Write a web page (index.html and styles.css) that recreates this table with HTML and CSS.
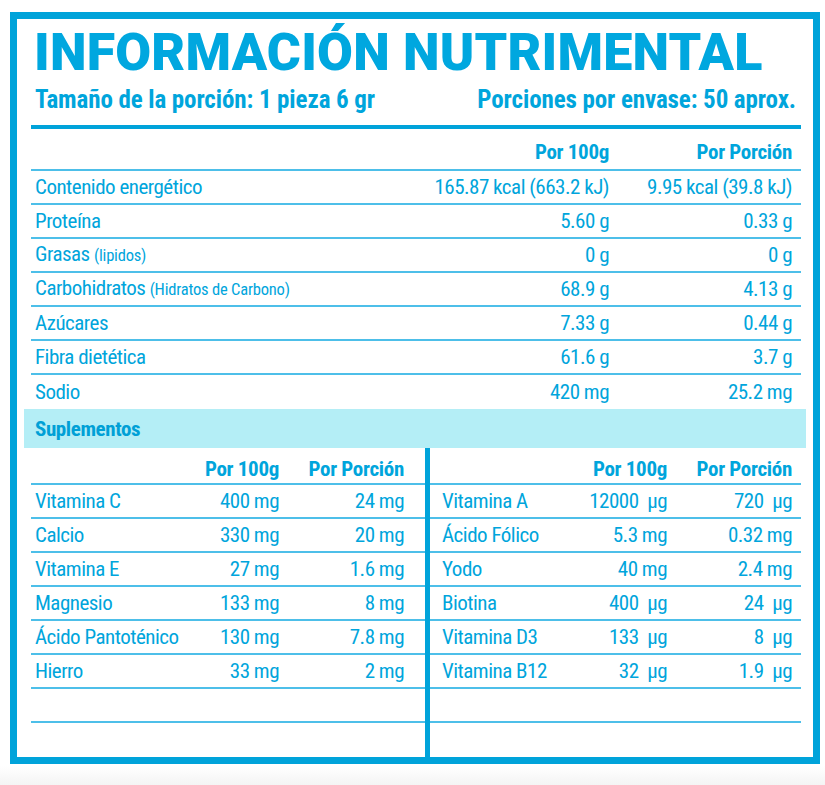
FILE: index.html
```html
<!DOCTYPE html>
<html lang="es">
<head>
<meta charset="utf-8">
<title>Información Nutrimental</title>
<link rel="stylesheet" href="styles.css">
</head>
<body>
<div class="label">
  <h1 class="title">INFORMACIÓN NUTRIMENTAL</h1>
  <div class="serving">
    <span>Tamaño de la porción: 1 pieza 6 gr</span>
    <span>Porciones por envase: 50 aprox.</span>
  </div>

  <div class="main">
    <div class="row head"><span></span><span>Por 100g</span><span>Por Porción</span></div>
    <div class="row"><span>Contenido energético</span><span>165.87 kcal (663.2 kJ)</span><span>9.95 kcal (39.8 kJ)</span></div>
    <div class="row"><span>Proteína</span><span>5.60 g</span><span>0.33 g</span></div>
    <div class="row"><span>Grasas <small>(lipidos)</small></span><span>0 g</span><span>0 g</span></div>
    <div class="row"><span>Carbohidratos <small>(Hidratos de Carbono)</small></span><span>68.9 g</span><span>4.13 g</span></div>
    <div class="row"><span>Azúcares</span><span>7.33 g</span><span>0.44 g</span></div>
    <div class="row"><span>Fibra dietética</span><span>61.6 g</span><span>3.7 g</span></div>
    <div class="row last"><span>Sodio</span><span>420 mg</span><span>25.2 mg</span></div>
  </div>

  <div class="band">Suplementos</div>

  <div class="supp">
    <div class="half left">
      <div class="row head"><span></span><span>Por 100g</span><span>Por Porción</span></div>
      <div class="row"><span>Vitamina C</span><span>400 mg</span><span>24 mg</span></div>
      <div class="row"><span>Calcio</span><span>330 mg</span><span>20 mg</span></div>
      <div class="row"><span>Vitamina E</span><span>27 mg</span><span>1.6 mg</span></div>
      <div class="row"><span>Magnesio</span><span>133 mg</span><span>8 mg</span></div>
      <div class="row"><span>Ácido Pantoténico</span><span>130 mg</span><span>7.8 mg</span></div>
      <div class="row"><span>Hierro</span><span>33 mg</span><span>2 mg</span></div>
      <div class="row"><span></span><span></span><span></span></div>
      <div class="row last"><span></span><span></span><span></span></div>
    </div>
    <div class="half right">
      <div class="row head"><span></span><span>Por 100g</span><span>Por Porción</span></div>
      <div class="row"><span>Vitamina A</span><span class="mu">12000  µg</span><span class="mu">720  µg</span></div>
      <div class="row"><span>Ácido Fólico</span><span>5.3 mg</span><span>0.32 mg</span></div>
      <div class="row"><span>Yodo</span><span>40 mg</span><span>2.4 mg</span></div>
      <div class="row"><span>Biotina</span><span class="mu">400  µg</span><span class="mu">24  µg</span></div>
      <div class="row"><span>Vitamina D3</span><span class="mu">133  µg</span><span class="mu">8  µg</span></div>
      <div class="row"><span>Vitamina B12</span><span class="mu">32  µg</span><span class="mu">1.9  µg</span></div>
      <div class="row"><span></span><span></span><span></span></div>
      <div class="row last"><span></span><span></span><span></span></div>
    </div>
  </div>
</div>
</body>
</html>
```
FILE: styles.css
```css
* { box-sizing: border-box; }

body {
  margin: 0;
  height: 785px;
  background: linear-gradient(to bottom, #ffffff 0, #ffffff 766px, #f4f4f4 785px);
  font-family: "Roboto Condensed", "Roboto", sans-serif;
  color: #00a5dc;
}

.label {
  width: 810px;
  height: 752px;
  margin: 12px 0 0 10px;
  border: 7px solid #00a3da;
  padding: 0 12px 0 14px;
  display: flex;
  flex-direction: column;
  background: #ffffff;
}

.title {
  margin: 8px 0 0 3px;
  font-family: "Roboto", sans-serif;
  font-weight: 900;
  font-size: 52px;
  line-height: 52px;
  letter-spacing: 0.2px;
  color: #00a7df;
}

.serving {
  display: flex;
  justify-content: space-between;
  margin-top: 7px;
  padding: 0 5px 11px 4px;
  border-bottom: 4px solid #00a3da;
  font-weight: 700;
  font-size: 25px;
  line-height: 28px;
  letter-spacing: -0.1px;
}

.row {
  display: grid;
  align-items: center;
  height: 34px;
  border-bottom: 2px solid #4dbfe9;
  font-size: 21px;
  line-height: 24px;
  letter-spacing: -0.5px;
  white-space: nowrap;
}

.row span { min-width: 0; }

.row span:nth-child(2),
.row span:nth-child(3) { text-align: right; }

.row.last { border-bottom: 0; }

.row small {
  font-size: 16.5px;
  letter-spacing: -0.2px;
}

.row.head {
  align-items: end;
  font-weight: 700;
  letter-spacing: -0.3px;
}

.main .row {
  grid-template-columns: minmax(0, 1fr) 190px 183px;
  padding: 0 9px 0 4px;
}

.main .row.head {
  height: 42px;
  padding-bottom: 5px;
}

.band {
  margin: 0 -5px 0 -7px;
  height: 39px;
  padding-left: 11px;
  display: flex;
  align-items: center;
  background: #b4eef6;
  font-weight: 700;
  font-size: 21px;
  letter-spacing: -0.4px;
  color: #00a0d6;
}

.supp {
  flex: 1;
  display: flex;
}

.half { min-width: 0; }

.half.left { width: 394px; flex: none; }

.half.right {
  flex: 1;
  border-left: 5px solid #00a3da;
}

.left .row {
  grid-template-columns: minmax(0, 1fr) 125px 125px;
  padding: 0 21px 0 4px;
}

.right .row {
  grid-template-columns: minmax(0, 1fr) 125px 125px;
  padding: 0 9px 0 12px;
}

.supp .row.head {
  height: 37px;
  padding-bottom: 2px;
}

.mu { white-space: pre; }
```
